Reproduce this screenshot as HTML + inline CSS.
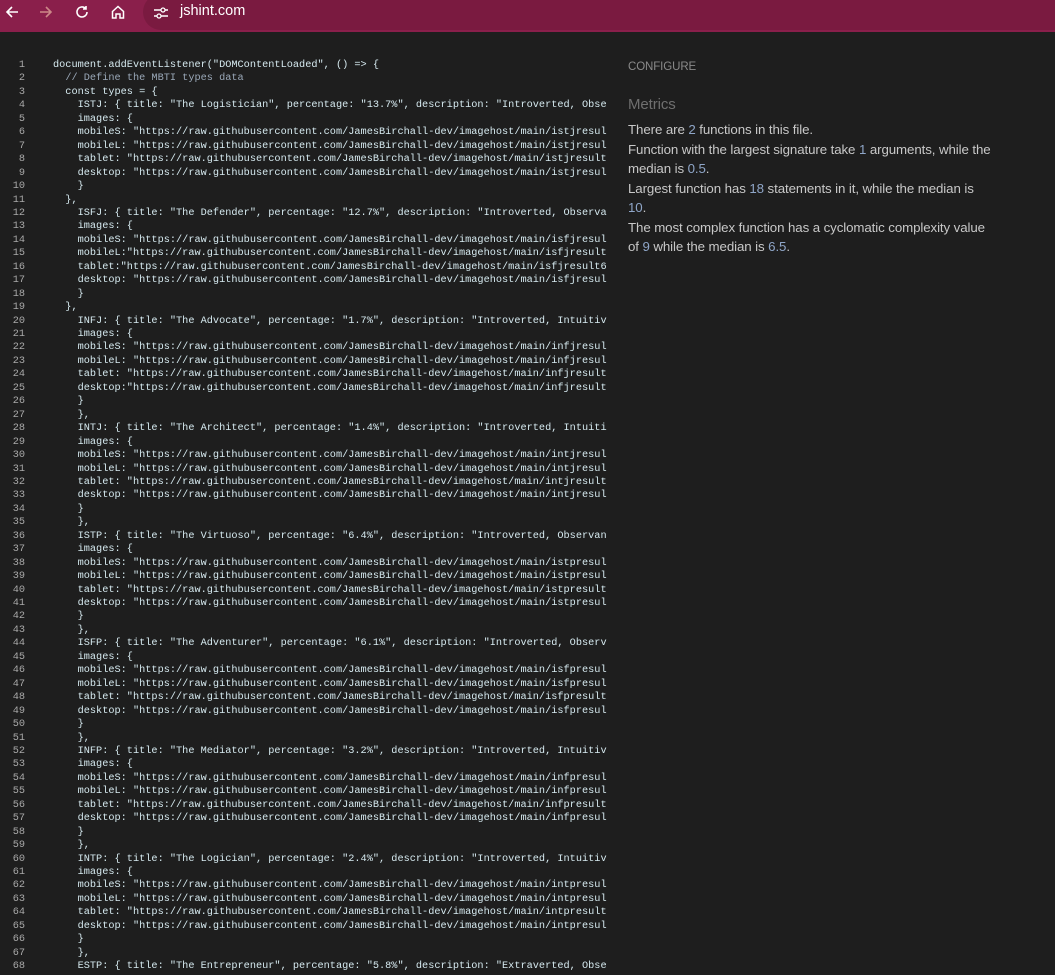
<!DOCTYPE html>
<html><head><meta charset="utf-8"><style>
body{margin:0;width:1055px;height:973px;background:#1e1e1e;overflow:hidden;font-family:"Liberation Sans",sans-serif}
.bar{position:absolute;left:0;top:0;width:1055px;height:32px;background:#8a1f4b}
.url{position:absolute;left:143px;top:-6px;width:1000px;height:36px;border-radius:18px;background:#7a1a40}
.url span{position:absolute;left:37px;top:9px;color:#fff;font-size:14.5px}
.ic{position:absolute;top:4px;color:#fff;font-size:16px}
.code{position:absolute;left:0;top:59px;width:607px;height:916px;overflow:hidden;font-family:"Liberation Mono",monospace;font-size:10.25px;line-height:13.45px;color:#d6eaf0;white-space:pre}
.ln{position:absolute;left:0;width:25px;text-align:right;color:#a9a9a9}
.tx{position:absolute;left:53px}
.cm{color:#9aa8b8}
.side{position:absolute;left:628px;top:58px;width:364px;color:#c8c8c8;font-size:13.3px;line-height:19px;letter-spacing:-0.1px}
.side b{font-weight:normal;color:#8fa6c8}
</style></head><body>
<div class="bar">
<svg class="ic" style="left:4px" width="16" height="16" viewBox="0 0 16 16"><path d="M14 8H3M8 3L3 8l5 5" stroke="#fff" stroke-width="1.6" fill="none"/></svg>
<svg class="ic" style="left:38px" width="16" height="16" viewBox="0 0 16 16"><path d="M2 8h11M8 3l5 5-5 5" stroke="#c88" stroke-width="1.6" fill="none"/></svg>
<svg class="ic" style="left:74px" width="16" height="16" viewBox="0 0 16 16"><path d="M13 8a5 5 0 1 1-1.5-3.6M12 2v3h-3" stroke="#fff" stroke-width="1.6" fill="none"/></svg>
<svg class="ic" style="left:110px" width="16" height="16" viewBox="0 0 16 16"><path d="M2.5 7.5L8 2.5l5.5 5V14H10v-4H6v4H2.5z" stroke="#fff" stroke-width="1.5" fill="none"/></svg>
<div class="url"><svg style="position:absolute;left:10px;top:12px" width="16" height="14" viewBox="0 0 16 14"><path d="M1 4h7M12 4h3M1 10h3M8 10h7" stroke="#fff" stroke-width="1.5"/><circle cx="10" cy="4" r="2" stroke="#fff" fill="none" stroke-width="1.3"/><circle cx="6" cy="10" r="2" stroke="#fff" fill="none" stroke-width="1.3"/></svg><span>jshint.com</span></div>
</div>
<div class="code" id="c"></div>
<div class="side">
<div style="font-size:11.5px;color:#8a8a8a;margin-bottom:18px">CONFIGURE</div>
<div style="font-size:15px;color:#6f6f6f;margin-bottom:6px">Metrics</div>
<div style="margin-bottom:1px">There are <b>2</b> functions in this file.</div>
<div style="margin-bottom:1px">Function with the largest signature take <b>1</b> arguments, while the median is <b>0.5</b>.</div>
<div style="margin-bottom:1px">Largest function has <b>18</b> statements in it, while the median is <b>10</b>.</div>
<div>The most complex function has a cyclomatic complexity value of <b>9</b> while the median is <b>6.5</b>.</div>
</div>
<script>
var U='"https://raw.githubusercontent.com/JamesBirchall-dev/imagehost/main/';
var L=['document.addEventListener("DOMContentLoaded", () => {','  <span class="cm">// Define the MBTI types data</span>','  const types = {'];
function blk(k,t,p,d,f,close,a,b,c,e){
L.push('    '+k+': { title: "'+t+'", percentage: "'+p+'", description: "'+d);
L.push('    images: {');
L.push('    mobileS:'+(a||' ')+U+f+'resul');
L.push('    mobileL:'+(b||' ')+U+f+'resul'+(b?'t':''));
L.push('    tablet:'+(c||' ')+U+f+'result'+(c?'6':''));
L.push('    desktop:'+(e||' ')+U+f+'resul');
L.push('    }');
L.push(close);
}
blk('ISTJ','The Logistician','13.7%','Introverted, Obse','istj','  },');
blk('ISFJ','The Defender','12.7%','Introverted, Observa','isfj','  },',0,'\u200b','\u200b');
blk('INFJ','The Advocate','1.7%','Introverted, Intuitiv','infj','    },',0,0,0,'\u200b');
L[L.length-3]='    desktop:'+U+'infjresult';
blk('INTJ','The Architect','1.4%','Introverted, Intuiti','intj','    },');
blk('ISTP','The Virtuoso','6.4%','Introverted, Observan','istp','    },');
blk('ISFP','The Adventurer','6.1%','Introverted, Observ','isfp','    },');
blk('INFP','The Mediator','3.2%','Introverted, Intuitiv','infp','    },');
blk('INTP','The Logician','2.4%','Introverted, Intuitiv','intp','    },');
L.push('    ESTP: { title: "The Entrepreneur", percentage: "5.8%", description: "Extraverted, Obse');
var h='';for(var i=0;i<L.length;i++){h+='<div class="ln" style="top:'+(i*13.45)+'px">'+(i+1)+'</div><div class="tx" style="top:'+(i*13.45)+'px">'+L[i]+'</div>';}
document.getElementById('c').innerHTML=h;
</script>
</body></html>
